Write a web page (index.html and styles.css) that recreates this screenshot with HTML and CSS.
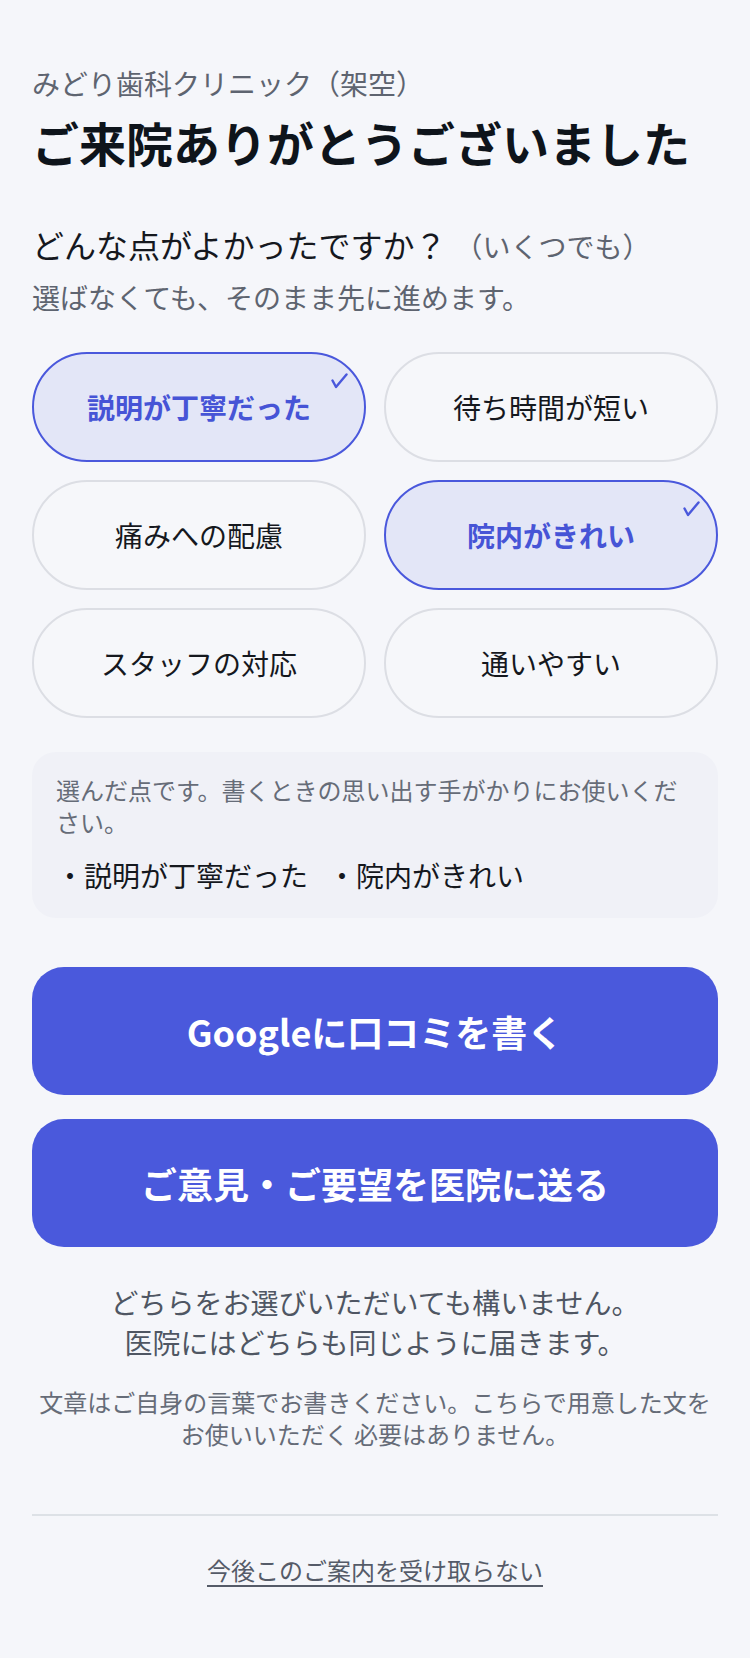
FILE: index.html
```html
<!DOCTYPE html>
<html lang="ja">
<head>
<meta charset="utf-8">
<title>ご来院ありがとうございました</title>
<link rel="stylesheet" href="styles.css">
</head>
<body>
<main class="page">
  <p class="clinic">みどり歯科クリニック（架空）</p>
  <h1 class="title">ご来院ありがとうございました</h1>

  <p class="question">どんな点がよかったですか？<span class="hint">（いくつでも）</span></p>
  <p class="sub">選ばなくても、そのまま先に進めます。</p>

  <div class="chips">
    <div class="chip is-selected">説明が丁寧だった<svg class="check" viewBox="0 0 18 16" width="18" height="16"><path d="M2.5 7.5 L6 14 L16.5 1.5" fill="none" stroke="currentColor" stroke-width="2.4" stroke-linecap="round" stroke-linejoin="round"/></svg></div>
    <div class="chip">待ち時間が短い</div>
    <div class="chip">痛みへの配慮</div>
    <div class="chip is-selected">院内がきれい<svg class="check" viewBox="0 0 18 16" width="18" height="16"><path d="M2.5 7.5 L6 14 L16.5 1.5" fill="none" stroke="currentColor" stroke-width="2.4" stroke-linecap="round" stroke-linejoin="round"/></svg></div>
    <div class="chip">スタッフの対応</div>
    <div class="chip">通いやすい</div>
  </div>

  <section class="summary">
    <p class="summary-lead">選んだ点です。書くときの思い出す手がかりにお使いください。</p>
    <ul class="summary-list">
      <li>・説明が丁寧だった</li>
      <li>・院内がきれい</li>
    </ul>
  </section>

  <div class="actions">
    <a class="action" href="#">Googleに口コミを書く</a>
    <a class="action" href="#">ご意見・ご要望を医院に送る</a>
  </div>

  <p class="note">どちらをお選びいただいても構いません。<br>医院にはどちらも同じように届きます。</p>
  <p class="fine">文章はご自身の言葉でお書きください。こちらで用意した文をお使いいただく 必要はありません。</p>

  <hr class="divider">

  <p class="optout"><a href="#">今後このご案内を受け取らない</a></p>
</main>
</body>
</html>
```

FILE: styles.css
```css
* { box-sizing: border-box; }

html, body {
  margin: 0;
  padding: 0;
  background: #f5f6fa;
}

body {
  font-family: "Noto Sans CJK JP", "Noto Sans", sans-serif;
  color: #15181e;
}

.page {
  padding: 63px 32px 60px;
}

p { margin: 0; }

.clinic {
  font-size: 28px;
  line-height: 40px;
  color: #5e6470;
}

.title {
  margin: 9px 0 0;
  font-size: 47px;
  line-height: 60px;
  font-weight: 700;
  color: #0e141b;
}

.question {
  margin-top: 50px;
  font-size: 32px;
  line-height: 44px;
  color: #15181e;
}

.hint {
  margin-left: 8px;
  font-size: 28px;
  color: #5e6470;
}

.sub {
  margin-top: 9px;
  font-size: 28px;
  line-height: 40px;
  color: #5e6470;
}

.chips {
  margin-top: 35px;
  display: grid;
  grid-template-columns: 1fr 1fr;
  gap: 18px;
}

.chip {
  position: relative;
  height: 110px;
  display: flex;
  align-items: center;
  justify-content: center;
  border: 2px solid #dcdee4;
  border-radius: 999px;
  background: #f6f7fa;
  font-size: 28px;
  color: #15181e;
}

.chip.is-selected {
  border-color: #4a58dc;
  background: #e3e6f7;
  color: #4654d6;
  font-weight: 700;
}

.check {
  position: absolute;
  top: 19px;
  right: 16px;
  color: #4a58dc;
}

.summary {
  margin-top: 34px;
  padding: 22px 24px 22px;
  border-radius: 24px;
  background: #f0f1f7;
}

.summary-lead {
  font-size: 24px;
  line-height: 32px;
  color: #666c78;
}

.summary-list {
  list-style: none;
  margin: 16px 0 0;
  padding: 0;
  display: flex;
  flex-wrap: wrap;
  column-gap: 20px;
  font-size: 28px;
  line-height: 42px;
  color: #15181e;
}

.actions {
  margin-top: 49px;
  display: flex;
  flex-direction: column;
  gap: 24px;
}

.action {
  height: 128px;
  display: flex;
  align-items: center;
  justify-content: center;
  border-radius: 32px;
  background: #4a59dc;
  color: #ffffff;
  font-size: 36px;
  font-weight: 700;
  text-decoration: none;
}

.note {
  margin-top: 35px;
  text-align: center;
  font-size: 28px;
  line-height: 40px;
  color: #4f5663;
}

.fine {
  margin-top: 24px;
  text-align: center;
  font-size: 24px;
  line-height: 31.5px;
  color: #666c78;
}

.divider {
  margin: 65px 0 0;
  border: 0;
  height: 2px;
  background: #dde1e6;
}

.optout {
  margin-top: 38px;
  text-align: center;
  font-size: 24px;
  line-height: 32px;
}

.optout a {
  color: #555b68;
  text-decoration: underline;
  text-decoration-thickness: 2px;
  text-underline-offset: 5px;
}
```
